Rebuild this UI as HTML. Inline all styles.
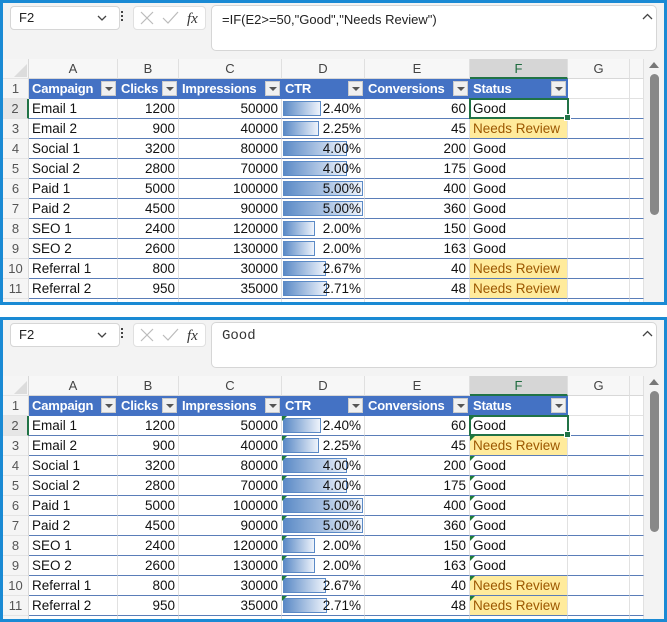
<!DOCTYPE html>
<html><head><meta charset="utf-8"><style>
body{margin:0;width:667px;height:622px;background:#fff;position:relative;overflow:hidden;font-family:"Liberation Sans",Arial,sans-serif}
.p{position:absolute;left:0;width:667px;height:305px;background:#fff;overflow:hidden}
.bd{position:absolute;left:0;top:0;right:0;bottom:0;border:3px solid #1a8ad4;pointer-events:none;z-index:20}
.fb{position:absolute;left:0;top:0;width:667px;height:59px;background:#f3f3f3}
.nb{position:absolute;left:10px;top:6px;width:100px;height:22px;background:#fff;border:1px solid #d6d6d6;border-radius:4px;font-size:13px;line-height:22px;padding-left:8px;box-sizing:content-box;color:#222}
.ib{position:absolute;left:133px;top:6px;width:71px;height:22px;background:#fff;border:1px solid #e0e0e0;border-radius:4px}
.fx{position:absolute;left:211px;top:5px;width:444px;height:44px;background:#fff;border:1px solid #d6d6d6;border-radius:5px;font-size:13px;color:#222}
.r{position:absolute;left:0;width:667px;height:20px}
.c{position:absolute;top:0;height:20px;line-height:19px;font-size:13.5px;padding:0 3px;box-sizing:border-box;white-space:nowrap;overflow:hidden;border-right:1px solid #e1e1e1;border-bottom:1px solid #e1e1e1;color:#111}
.h{position:absolute;left:3px;width:26px;top:0;height:20px;line-height:20px;text-align:center;font-size:13px;color:#555;background:#f5f5f5;border-right:1px solid #d8d8d8;border-bottom:1px solid #e4e4e4;box-sizing:border-box}
.a{left:29px;width:89px}.b{left:118px;width:61px}.cc{left:179px;width:103px}.d{left:282px;width:83px}.e{left:365px;width:105px}.f{left:470px;width:98px}.g{left:568px;width:62px}.hh{left:630px;width:14px}
.n{text-align:right}
.t .c{border-bottom:1px solid #5a7db8}
.hd .c{background:#4472c4;color:#fff;font-weight:bold;border-right:none;border-bottom:none;font-size:13px;letter-spacing:-0.2px}
.hd .g,.hd .hh{background:#fff;border-right:1px solid #e1e1e1;border-bottom:1px solid #e1e1e1}
.dd{position:absolute;right:2px;top:2px;width:15px;height:15px;background:#f0f0f0;border:1px solid #ccc;box-sizing:border-box}
.dd:after{content:"";position:absolute;left:3px;top:5px;border-left:4px solid transparent;border-right:4px solid transparent;border-top:4px solid #555}
.ch .c{background:#f7f7f7;color:#444;text-align:center;font-size:13px;border-right:1px solid #e0e0e0;border-bottom:1px solid #d8d8d8}
.ch .f{background:#d6d6d6;color:#1e6b3f;border-bottom:2px solid #217346}
.d i{position:absolute;left:1px;top:2px;height:15px;box-sizing:border-box;border:1px solid #5b8ac6;background:linear-gradient(90deg,#5b8ac6,#eef3fb)}
.d span{position:relative}
.nr{background:#ffeb9c!important;color:#9c5700!important}
.tri:before{content:"";position:absolute;left:0;top:0;border-top:5px solid #1e7b3a;border-right:5px solid transparent;z-index:2}
.sb{position:absolute;left:644px;top:59px;width:20px;height:246px;background:#f3f3f3}
.th{position:absolute;left:650px;width:9px;border-radius:5px;background:#888}
.ua{position:absolute;left:649px;border-left:5px solid transparent;border-right:5px solid transparent;border-bottom:6px solid #777}
.sel{position:absolute;left:469px;top:98px;width:100px;height:21px;border:2px solid #217346;box-sizing:border-box;z-index:5}
.sel:after{content:"";position:absolute;right:-4px;bottom:-4px;width:5px;height:5px;background:#217346;border:1px solid #fff}
</style></head><body>

<!-- PANEL 1 -->
<div class="p" style="top:0">
<div class="fb"></div>
<div class="nb">F2<svg style="position:absolute;left:86px;top:8px" width="10" height="7"><path d="M1 1 L5 5 L9 1" stroke="#444" fill="none" stroke-width="1.3"/></svg></div>
<div style="position:absolute;left:121px;top:11px;width:3px;font-size:0"><div style="width:2px;height:2px;background:#444;margin-bottom:2px"></div><div style="width:2px;height:2px;background:#444;margin-bottom:2px"></div><div style="width:2px;height:2px;background:#444"></div></div>
<div class="ib"><svg width="71" height="22"><path d="M7 5 L19 17 M19 5 L7 17" stroke="#bbb" stroke-width="1.2"/><path d="M29 11 L34 16 L44 5" stroke="#bbb" stroke-width="1.2" fill="none"/><text x="53" y="16" font-family="Liberation Serif" font-style="italic" font-size="15" fill="#333">fx</text></svg></div>
<div class="fx"><span style="position:absolute;left:10px;top:6px">=IF(E2&gt;=50,"Good","Needs Review")</span><svg style="position:absolute;left:430px;top:7px" width="11" height="7"><path d="M1 6 L5.5 1.5 L10 6" stroke="#444" fill="none" stroke-width="1.3"/></svg></div>

<div class="r ch" style="top:59px"><div class="h" style="background:#f5f5f5"><svg width="26" height="20"><path d="M24 5 L24 18 L11 18 Z" fill="#dcdcdc"/></svg></div><div class="c a">A</div><div class="c b">B</div><div class="c cc">C</div><div class="c d">D</div><div class="c e">E</div><div class="c f">F</div><div class="c g">G</div><div class="c hh"></div></div>
<div class="r hd" style="top:79px"><div class="h">1</div><div class="c a">Campaign<b class="dd"></b></div><div class="c b">Clicks<b class="dd"></b></div><div class="c cc">Impressions<b class="dd"></b></div><div class="c d">CTR<b class="dd"></b></div><div class="c e">Conversions<b class="dd"></b></div><div class="c f">Status<b class="dd"></b></div><div class="c g"></div><div class="c hh"></div></div>
<div class="r t" style="top:99px"><div class="h" style="background:#e6e6e6;border-right:2px solid #217346">2</div><div class="c a">Email 1</div><div class="c b n">1200</div><div class="c cc n">50000</div><div class="c d n"><i style="width:38px"></i><span>2.40%</span></div><div class="c e n">60</div><div class="c f">Good</div><div class="c g"></div><div class="c hh"></div></div>
<div class="r t" style="top:119px"><div class="h">3</div><div class="c a">Email 2</div><div class="c b n">900</div><div class="c cc n">40000</div><div class="c d n"><i style="width:36px"></i><span>2.25%</span></div><div class="c e n">45</div><div class="c f nr">Needs Review</div><div class="c g"></div><div class="c hh"></div></div>
<div class="r t" style="top:139px"><div class="h">4</div><div class="c a">Social 1</div><div class="c b n">3200</div><div class="c cc n">80000</div><div class="c d n"><i style="width:64px"></i><span>4.00%</span></div><div class="c e n">200</div><div class="c f">Good</div><div class="c g"></div><div class="c hh"></div></div>
<div class="r t" style="top:159px"><div class="h">5</div><div class="c a">Social 2</div><div class="c b n">2800</div><div class="c cc n">70000</div><div class="c d n"><i style="width:64px"></i><span>4.00%</span></div><div class="c e n">175</div><div class="c f">Good</div><div class="c g"></div><div class="c hh"></div></div>
<div class="r t" style="top:179px"><div class="h">6</div><div class="c a">Paid 1</div><div class="c b n">5000</div><div class="c cc n">100000</div><div class="c d n"><i style="width:80px"></i><span>5.00%</span></div><div class="c e n">400</div><div class="c f">Good</div><div class="c g"></div><div class="c hh"></div></div>
<div class="r t" style="top:199px"><div class="h">7</div><div class="c a">Paid 2</div><div class="c b n">4500</div><div class="c cc n">90000</div><div class="c d n"><i style="width:80px"></i><span>5.00%</span></div><div class="c e n">360</div><div class="c f">Good</div><div class="c g"></div><div class="c hh"></div></div>
<div class="r t" style="top:219px"><div class="h">8</div><div class="c a">SEO 1</div><div class="c b n">2400</div><div class="c cc n">120000</div><div class="c d n"><i style="width:32px"></i><span>2.00%</span></div><div class="c e n">150</div><div class="c f">Good</div><div class="c g"></div><div class="c hh"></div></div>
<div class="r t" style="top:239px"><div class="h">9</div><div class="c a">SEO 2</div><div class="c b n">2600</div><div class="c cc n">130000</div><div class="c d n"><i style="width:32px"></i><span>2.00%</span></div><div class="c e n">163</div><div class="c f">Good</div><div class="c g"></div><div class="c hh"></div></div>
<div class="r t" style="top:259px"><div class="h">10</div><div class="c a">Referral 1</div><div class="c b n">800</div><div class="c cc n">30000</div><div class="c d n"><i style="width:43px"></i><span>2.67%</span></div><div class="c e n">40</div><div class="c f nr">Needs Review</div><div class="c g"></div><div class="c hh"></div></div>
<div class="r t" style="top:279px"><div class="h">11</div><div class="c a">Referral 2</div><div class="c b n">950</div><div class="c cc n">35000</div><div class="c d n"><i style="width:44px"></i><span>2.71%</span></div><div class="c e n">48</div><div class="c f nr">Needs Review</div><div class="c g"></div><div class="c hh"></div></div>
<div class="r" style="top:299px"><div class="h">12</div><div class="c a"></div><div class="c b"></div><div class="c cc"></div><div class="c d"></div><div class="c e"></div><div class="c f"></div><div class="c g"></div><div class="c hh"></div></div>
<div class="sel"></div>
<div class="sb"></div><div class="ua" style="top:62px"></div><div class="th" style="top:74px;height:141px"></div>
<div class="bd"></div>
</div>

<!-- PANEL 2 -->
<div class="p" style="top:317px">
<div class="fb"></div>
<div class="nb">F2<svg style="position:absolute;left:86px;top:8px" width="10" height="7"><path d="M1 1 L5 5 L9 1" stroke="#444" fill="none" stroke-width="1.3"/></svg></div>
<div style="position:absolute;left:121px;top:11px;width:3px;font-size:0"><div style="width:2px;height:2px;background:#444;margin-bottom:2px"></div><div style="width:2px;height:2px;background:#444;margin-bottom:2px"></div><div style="width:2px;height:2px;background:#444"></div></div>
<div class="ib"><svg width="71" height="22"><path d="M7 5 L19 17 M19 5 L7 17" stroke="#bbb" stroke-width="1.2"/><path d="M29 11 L34 16 L44 5" stroke="#bbb" stroke-width="1.2" fill="none"/><text x="53" y="16" font-family="Liberation Serif" font-style="italic" font-size="15" fill="#333">fx</text></svg></div>
<div class="fx"><span style="position:absolute;left:10px;top:5px;font-family:'Liberation Mono',monospace;font-size:14px;color:#333">Good</span><svg style="position:absolute;left:430px;top:7px" width="11" height="7"><path d="M1 6 L5.5 1.5 L10 6" stroke="#444" fill="none" stroke-width="1.3"/></svg></div>

<div class="r ch" style="top:59px"><div class="h" style="background:#f5f5f5"><svg width="26" height="20"><path d="M24 5 L24 18 L11 18 Z" fill="#dcdcdc"/></svg></div><div class="c a">A</div><div class="c b">B</div><div class="c cc">C</div><div class="c d">D</div><div class="c e">E</div><div class="c f">F</div><div class="c g">G</div><div class="c hh"></div></div>
<div class="r hd" style="top:79px"><div class="h">1</div><div class="c a">Campaign<b class="dd"></b></div><div class="c b">Clicks<b class="dd"></b></div><div class="c cc">Impressions<b class="dd"></b></div><div class="c d">CTR<b class="dd"></b></div><div class="c e">Conversions<b class="dd"></b></div><div class="c f">Status<b class="dd"></b></div><div class="c g"></div><div class="c hh"></div></div>
<div class="r t" style="top:99px"><div class="h" style="background:#e6e6e6;border-right:2px solid #217346">2</div><div class="c a">Email 1</div><div class="c b n">1200</div><div class="c cc n">50000</div><div class="c d n tri"><i style="width:38px"></i><span>2.40%</span></div><div class="c e n">60</div><div class="c f tri">Good</div><div class="c g"></div><div class="c hh"></div></div>
<div class="r t" style="top:119px"><div class="h">3</div><div class="c a">Email 2</div><div class="c b n">900</div><div class="c cc n">40000</div><div class="c d n tri"><i style="width:36px"></i><span>2.25%</span></div><div class="c e n">45</div><div class="c f nr tri">Needs Review</div><div class="c g"></div><div class="c hh"></div></div>
<div class="r t" style="top:139px"><div class="h">4</div><div class="c a">Social 1</div><div class="c b n">3200</div><div class="c cc n">80000</div><div class="c d n tri"><i style="width:64px"></i><span>4.00%</span></div><div class="c e n">200</div><div class="c f tri">Good</div><div class="c g"></div><div class="c hh"></div></div>
<div class="r t" style="top:159px"><div class="h">5</div><div class="c a">Social 2</div><div class="c b n">2800</div><div class="c cc n">70000</div><div class="c d n tri"><i style="width:64px"></i><span>4.00%</span></div><div class="c e n">175</div><div class="c f tri">Good</div><div class="c g"></div><div class="c hh"></div></div>
<div class="r t" style="top:179px"><div class="h">6</div><div class="c a">Paid 1</div><div class="c b n">5000</div><div class="c cc n">100000</div><div class="c d n tri"><i style="width:80px"></i><span>5.00%</span></div><div class="c e n">400</div><div class="c f tri">Good</div><div class="c g"></div><div class="c hh"></div></div>
<div class="r t" style="top:199px"><div class="h">7</div><div class="c a">Paid 2</div><div class="c b n">4500</div><div class="c cc n">90000</div><div class="c d n tri"><i style="width:80px"></i><span>5.00%</span></div><div class="c e n">360</div><div class="c f tri">Good</div><div class="c g"></div><div class="c hh"></div></div>
<div class="r t" style="top:219px"><div class="h">8</div><div class="c a">SEO 1</div><div class="c b n">2400</div><div class="c cc n">120000</div><div class="c d n tri"><i style="width:32px"></i><span>2.00%</span></div><div class="c e n">150</div><div class="c f tri">Good</div><div class="c g"></div><div class="c hh"></div></div>
<div class="r t" style="top:239px"><div class="h">9</div><div class="c a">SEO 2</div><div class="c b n">2600</div><div class="c cc n">130000</div><div class="c d n tri"><i style="width:32px"></i><span>2.00%</span></div><div class="c e n">163</div><div class="c f tri">Good</div><div class="c g"></div><div class="c hh"></div></div>
<div class="r t" style="top:259px"><div class="h">10</div><div class="c a">Referral 1</div><div class="c b n">800</div><div class="c cc n">30000</div><div class="c d n tri"><i style="width:43px"></i><span>2.67%</span></div><div class="c e n">40</div><div class="c f nr tri">Needs Review</div><div class="c g"></div><div class="c hh"></div></div>
<div class="r t" style="top:279px"><div class="h">11</div><div class="c a">Referral 2</div><div class="c b n">950</div><div class="c cc n">35000</div><div class="c d n tri"><i style="width:44px"></i><span>2.71%</span></div><div class="c e n">48</div><div class="c f nr tri">Needs Review</div><div class="c g"></div><div class="c hh"></div></div>
<div class="r" style="top:299px"><div class="h">12</div><div class="c a"></div><div class="c b"></div><div class="c cc"></div><div class="c d"></div><div class="c e"></div><div class="c f"></div><div class="c g"></div><div class="c hh"></div></div>
<div class="sel"></div>
<div class="sb"></div><div class="ua" style="top:62px"></div><div class="th" style="top:74px;height:141px"></div>
<div class="bd"></div>
</div>
</body></html>
